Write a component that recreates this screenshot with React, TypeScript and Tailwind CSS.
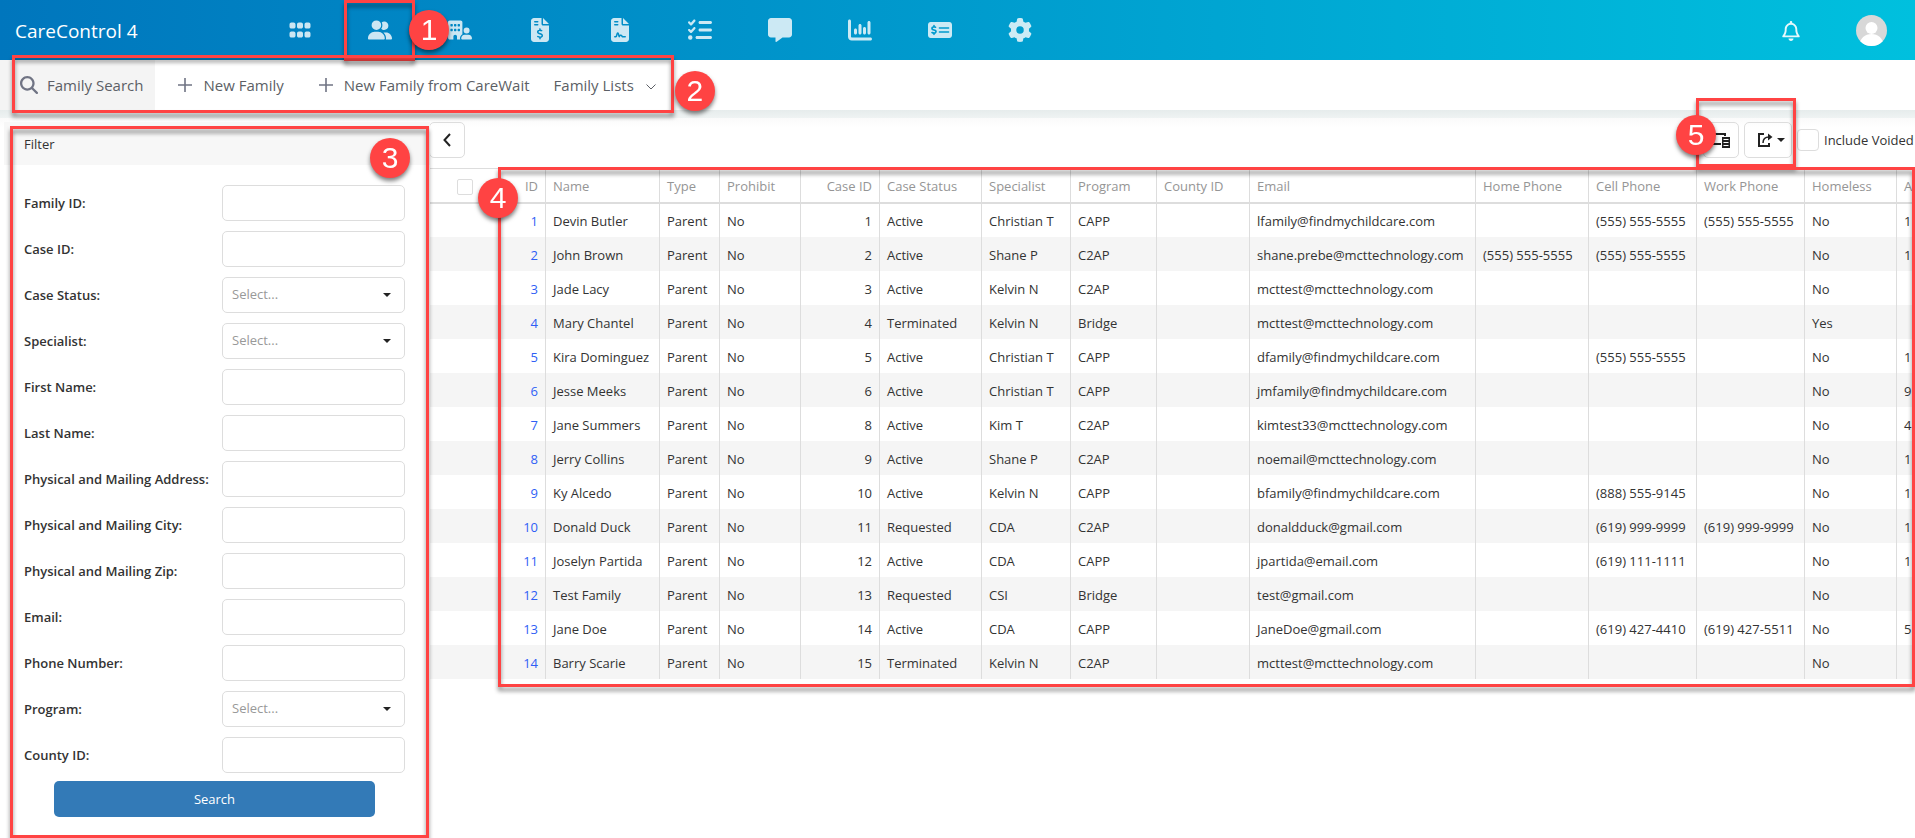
import type { ReactNode } from 'react';
import {
    FaBuildingUser,
    FaChartColumn,
    FaFileContract,
    FaFileInvoiceDollar,
    FaGear,
    FaGrip,
    FaListCheck,
    FaMagnifyingGlass,
    FaMessage,
    FaMoneyCheckDollar,
    FaRegBell,
    FaUserGroup,
} from 'react-icons/fa6';

type Family = {
    id: number;
    name: string;
    caseId: number;
    status: string;
    specialist: string;
    program: string;
    email: string;
    home?: string;
    cell?: string;
    work?: string;
    homeless?: string;
    age?: string;
};

const families: Family[] = [
    { id: 1, name: 'Devin Butler', caseId: 1, status: 'Active', specialist: 'Christian T', program: 'CAPP', email: 'lfamily@findmychildcare.com', cell: '(555) 555-5555', work: '(555) 555-5555', age: '1' },
    { id: 2, name: 'John Brown', caseId: 2, status: 'Active', specialist: 'Shane P', program: 'C2AP', email: 'shane.prebe@mcttechnology.com', home: '(555) 555-5555', cell: '(555) 555-5555', age: '1' },
    { id: 3, name: 'Jade Lacy', caseId: 3, status: 'Active', specialist: 'Kelvin N', program: 'C2AP', email: 'mcttest@mcttechnology.com' },
    { id: 4, name: 'Mary Chantel', caseId: 4, status: 'Terminated', specialist: 'Kelvin N', program: 'Bridge', email: 'mcttest@mcttechnology.com', homeless: 'Yes' },
    { id: 5, name: 'Kira Dominguez', caseId: 5, status: 'Active', specialist: 'Christian T', program: 'CAPP', email: 'dfamily@findmychildcare.com', cell: '(555) 555-5555', age: '1' },
    { id: 6, name: 'Jesse Meeks', caseId: 6, status: 'Active', specialist: 'Christian T', program: 'CAPP', email: 'jmfamily@findmychildcare.com', age: '9' },
    { id: 7, name: 'Jane Summers', caseId: 8, status: 'Active', specialist: 'Kim T', program: 'C2AP', email: 'kimtest33@mcttechnology.com', age: '4' },
    { id: 8, name: 'Jerry Collins', caseId: 9, status: 'Active', specialist: 'Shane P', program: 'C2AP', email: 'noemail@mcttechnology.com', age: '1' },
    { id: 9, name: 'Ky Alcedo', caseId: 10, status: 'Active', specialist: 'Kelvin N', program: 'CAPP', email: 'bfamily@findmychildcare.com', cell: '(888) 555-9145', age: '1' },
    { id: 10, name: 'Donald Duck', caseId: 11, status: 'Requested', specialist: 'CDA', program: 'C2AP', email: 'donaldduck@gmail.com', cell: '(619) 999-9999', work: '(619) 999-9999', age: '1' },
    { id: 11, name: 'Joselyn Partida', caseId: 12, status: 'Active', specialist: 'CDA', program: 'CAPP', email: 'jpartida@email.com', cell: '(619) 111-1111', age: '1' },
    { id: 12, name: 'Test Family', caseId: 13, status: 'Requested', specialist: 'CSI', program: 'Bridge', email: 'test@gmail.com' },
    { id: 13, name: 'Jane Doe', caseId: 14, status: 'Active', specialist: 'CDA', program: 'CAPP', email: 'JaneDoe@gmail.com', cell: '(619) 427-4410', work: '(619) 427-5511', age: '5' },
    { id: 14, name: 'Barry Scarie', caseId: 15, status: 'Terminated', specialist: 'Kelvin N', program: 'C2AP', email: 'mcttest@mcttechnology.com' },
];

const columns = [
    { title: 'Name', width: 'w-[114px]' },
    { title: 'Type', width: 'w-[60px]' },
    { title: 'Prohibit', width: 'w-[81px]' },
    { title: 'Case ID', width: 'w-[79px]' },
    { title: 'Case Status', width: 'w-[102px]' },
    { title: 'Specialist', width: 'w-[89px]' },
    { title: 'Program', width: 'w-[86px]' },
    { title: 'County ID', width: 'w-[93px]' },
    { title: 'Email', width: 'w-[226px]' },
    { title: 'Home Phone', width: 'w-[113px]' },
    { title: 'Cell Phone', width: 'w-[108px]' },
    { title: 'Work Phone', width: 'w-[108px]' },
    { title: 'Homeless', width: 'w-[92px]' },
    { title: 'A', width: 'w-auto' },
];

const filters = [
    { id: 'family-id', label: 'Family ID:' },
    { id: 'case-id', label: 'Case ID:' },
    { id: 'case-status', label: 'Case Status:', select: true },
    { id: 'specialist', label: 'Specialist:', select: true },
    { id: 'first-name', label: 'First Name:' },
    { id: 'last-name', label: 'Last Name:' },
    { id: 'address', label: 'Physical and Mailing Address:' },
    { id: 'city', label: 'Physical and Mailing City:' },
    { id: 'zip', label: 'Physical and Mailing Zip:' },
    { id: 'email', label: 'Email:' },
    { id: 'phone', label: 'Phone Number:' },
    { id: 'program', label: 'Program:', select: true },
    { id: 'county-id', label: 'County ID:' },
];

const navItems = [
    { label: 'Apps', Icon: FaGrip },
    { label: 'Families', Icon: FaUserGroup },
    { label: 'Providers', Icon: FaBuildingUser },
    { label: 'Invoices', Icon: FaFileInvoiceDollar },
    { label: 'Contracts', Icon: FaFileContract },
    { label: 'Tasks', Icon: FaListCheck },
    { label: 'Messages', Icon: FaMessage },
    { label: 'Reports', Icon: FaChartColumn },
    { label: 'Payments', Icon: FaMoneyCheckDollar },
    { label: 'Settings', Icon: FaGear },
];

function Marker({ className }: { className: string }) {
    return (
        <div
            className={`pointer-events-none absolute z-10 border-3 border-[#ff4343] drop-shadow-[0_4px_2px_rgba(0,0,0,0.45)] ${className}`}
            aria-hidden
        />
    );
}

function Badge({ n, className }: { n: number; className: string }) {
    return (
        <div
            className={`absolute z-20 flex size-10 items-center justify-center rounded-full bg-[#ff4343] font-['Liberation_Sans',sans-serif] text-[30px] leading-10 text-white drop-shadow-[0_3px_2px_rgba(0,0,0,0.5)] ${className}`}
        >
            {n}
        </div>
    );
}

function Caret() {
    return (
        <svg viewBox="0 0 8 4" className="h-1 w-2 fill-[#222]" aria-hidden>
            <path d="M0 0h8L4 4z" />
        </svg>
    );
}

function PlusIcon() {
    return (
        <svg viewBox="0 0 14 14" className="size-3.5 stroke-[#707484]" strokeWidth="1.6" aria-hidden>
            <path d="M7 0v14M0 7h14" />
        </svg>
    );
}

function ToolbarButton({ icon, children, className }: { icon?: ReactNode; children: ReactNode; className: string }) {
    return (
        <button type="button" className={`flex h-full items-center whitespace-nowrap ${className}`}>
            {icon}
            {children}
        </button>
    );
}

function Header() {
    return (
        <header className="flex h-15 items-center bg-linear-to-r/srgb from-[#0076bd] to-[#00c0de] pl-[15px] pr-7 text-white">
            <h1 className="w-[245px] pt-0.5 text-[19px]">CareControl 4</h1>
            <nav className="flex">
                {navItems.map(({ label, Icon }) => (
                    <button
                        key={label}
                        type="button"
                        aria-label={label}
                        className="relative flex h-15 w-20 items-center justify-center text-white"
                    >
                        <Icon size={24} className="opacity-80" />
                        {label === 'Families' && (
                            <>
                                <Marker className="left-1 right-[5px] top-0 -bottom-px" />
                                <Badge n={1} className="left-[69px] top-2.5" />
                            </>
                        )}
                    </button>
                ))}
            </nav>
            <div className="ml-auto flex items-center gap-[55px]">
                <button type="button" aria-label="Notifications" className="pt-0.5">
                    <FaRegBell size={20} className="opacity-90" />
                </button>
                <button type="button" aria-label="Account">
                    <svg viewBox="0 0 31 31" className="size-[31px]" aria-hidden>
                        <defs>
                            <clipPath id="avatar">
                                <circle cx="15.5" cy="15.5" r="15.5" />
                            </clipPath>
                        </defs>
                        <g clipPath="url(#avatar)">
                            <rect width="31" height="31" fill="#d8d8d8" />
                            <circle cx="15.5" cy="13" r="6" fill="#fff" />
                            <path d="M3 31c1-8 6-12 12.500-12S27 23 28 31z" fill="#fff" />
                        </g>
                    </svg>
                </button>
            </div>
        </header>
    );
}

function Toolbar() {
    return (
        <div className="flex h-[50px] bg-white text-[15px] text-[#5c5f66]">
            <div className="relative flex">
                <ToolbarButton
                    className="gap-[9px] bg-[#f4f4f4] pl-5 pr-3"
                    icon={<FaMagnifyingGlass size={18} className="text-[#707484]" />}
                >
                    Family Search
                </ToolbarButton>
                <ToolbarButton className="gap-[11px] pl-[23px] pr-3" icon={<PlusIcon />}>
                    New Family
                </ToolbarButton>
                <ToolbarButton className="gap-[11px] pl-[23px] pr-3" icon={<PlusIcon />}>
                    New Family from CareWait
                </ToolbarButton>
                <ToolbarButton className="gap-3 pl-3 pr-[18px]">
                    Family Lists
                    <svg viewBox="0 0 10 6" className="mt-1 h-1.5 w-2.5 fill-none stroke-[#5c5f66]" aria-hidden>
                        <path d="M.5.5 5 5 9.500.5" />
                    </svg>
                </ToolbarButton>
                <Marker className="-bottom-[3px] -top-[5px] left-3 right-0" />
                <Badge n={2} className="-right-[41px] top-[11px]" />
            </div>
        </div>
    );
}

function FilterPanel() {
    return (
        <aside className="relative w-[430px] shrink-0 pb-[21px] pl-1 pt-1">
            <h2 className="h-[43px] bg-[#f7f7f7] pl-5 pt-px leading-[43px]">Filter</h2>
            <form className="flex flex-col pl-5 pr-[25px] pt-5">
                <div className="flex flex-col gap-2.5">
                    {filters.map(({ id, label, select }) => (
                        <div key={id} className="flex h-9 items-center">
                            <label htmlFor={id} className="w-[198px] whitespace-nowrap pt-0.5 font-semibold">
                                {label}
                            </label>
                            {select ? (
                                <div className="relative flex-1">
                                    <select
                                        id={id}
                                        className="h-9 w-full appearance-none rounded-[5px] border border-[#ddd] bg-white px-[9px] text-[#999]"
                                    >
                                        <option>Select...</option>
                                    </select>
                                    <span className="pointer-events-none absolute right-3.5 top-4">
                                        <Caret />
                                    </span>
                                </div>
                            ) : (
                                <input
                                    id={id}
                                    type="text"
                                    className="h-9 min-w-0 flex-1 rounded-[5px] border border-[#ddd] bg-white px-[9px]"
                                />
                            )}
                        </div>
                    ))}
                </div>
                <button type="button" className="mx-[30px] mt-2 h-9 rounded-[5px] bg-[#337ab7] pt-0.5 text-white">
                    Search
                </button>
            </form>
            <Marker className="bottom-0 left-2.5 right-px top-2" />
            <Badge n={3} className="right-5 top-5" />
        </aside>
    );
}

function GridToolbar() {
    return (
        <div className="flex h-[50px] items-start pt-1">
            <button
                type="button"
                aria-label="Collapse filter"
                className="-ml-px flex size-9 items-center justify-center rounded-[5px] border border-[#ddd]"
            >
                <svg viewBox="0 0 8 14" className="h-3.5 w-2 fill-none stroke-[#222]" strokeWidth="2" aria-hidden>
                    <path d="M7 1 1.500 7 7 13" />
                </svg>
            </button>
            <div className="relative ml-auto flex gap-[5px] pr-1">
                <button
                    type="button"
                    aria-label="Column chooser"
                    className="flex size-9 items-center justify-center rounded-[5px] border border-[#ddd]"
                >
                    <svg viewBox="0 0 18 16" className="h-4 w-[18px]" fill="none" stroke="#222" strokeWidth="2" aria-hidden>
                        <path d="M13 4V2H1v10h8" />
                        <path d="M10 5h8v11h-8z" fill="#222" stroke="none" />
                        <path d="M11.500 7.500h5M11.500 10.500h5M11.500 13.500h5" stroke="#fff" strokeWidth="1" />
                    </svg>
                </button>
                <button
                    type="button"
                    aria-label="Export"
                    className="flex h-9 w-12 items-center justify-center gap-1 rounded-[5px] border border-[#ddd] pl-1.5"
                >
                    <svg viewBox="0 0 16 16" className="size-4" fill="none" stroke="#222" strokeWidth="2" aria-hidden>
                        <path d="M7 2H2v12h10v-3" />
                        <path d="M6 11c0-4 2-6 6-6" strokeWidth="1.500" />
                        <path d="M11 1.500 15.500 5 11 8.500z" fill="#222" stroke="none" />
                    </svg>
                    <Caret />
                </button>
                <Marker className="-bottom-[9px] -left-[7px] right-0 -top-6" />
                <Badge n={5} className="-left-[27px] -top-[7px]" />
            </div>
            <label className="flex h-9 w-[119px] items-center gap-[5px] whitespace-nowrap">
                <input type="checkbox" className="ml-px size-[22px] shrink-0 appearance-none rounded-sm border border-[#ddd] bg-white" />
                <span className="pt-0.5">Include Voided</span>
            </label>
        </div>
    );
}

function FamilyGrid() {
    return (
        <div className="relative pb-2">
            <table className="w-full table-fixed border-separate border-spacing-0 whitespace-nowrap text-left">
                <colgroup>
                    <col className="w-[60px]" />
                    <col className="w-[55px]" />
                    {columns.map(({ title, width }) => (
                        <col key={title} className={width} />
                    ))}
                </colgroup>
                <thead>
                    <tr className="h-9 text-[#959595] *:border-b-2 *:border-t *:border-[#ddd] *:px-[7px] *:pt-0.5 *:font-normal">
                        <th>
                            <input
                                type="checkbox"
                                aria-label="Select all"
                                className="ml-5 block size-4 appearance-none rounded-xs border border-[#ddd] bg-white"
                            />
                        </th>
                        <th className="text-right">ID</th>
                        {columns.map(({ title }) => (
                            <th key={title} className={`border-l ${title === 'Case ID' ? 'text-right' : ''}`}>
                                {title}
                            </th>
                        ))}
                    </tr>
                </thead>
                <tbody>
                    {families.map((f) => (
                        <tr
                            key={f.id}
                            className="h-[34px] first:h-[33px] even:bg-[#f5f5f5] *:border-[#ddd] *:px-[7px] *:pt-[3px] *:nth-[n+3]:border-l"
                        >
                            <td />
                            <td className="text-right">
                                <a href="#" className="text-[#2f5ff5]">
                                    {f.id}
                                </a>
                            </td>
                            <td>{f.name}</td>
                            <td>Parent</td>
                            <td>No</td>
                            <td className="text-right">{f.caseId}</td>
                            <td>{f.status}</td>
                            <td>{f.specialist}</td>
                            <td>{f.program}</td>
                            <td />
                            <td>{f.email}</td>
                            <td>{f.home}</td>
                            <td>{f.cell}</td>
                            <td>{f.work}</td>
                            <td>{f.homeless ?? 'No'}</td>
                            <td>{f.age}</td>
                        </tr>
                    ))}
                </tbody>
            </table>
            <Marker className="-top-px bottom-0 left-[68px] right-0" />
            <Badge n={4} className="left-12 top-2.5" />
        </div>
    );
}

export default function App() {
    return (
        <div className="min-h-screen overflow-hidden bg-white font-['Open_Sans',sans-serif] text-[13px] text-[#333]">
            <Header />
            <Toolbar />
            <div className="h-2 bg-linear-to-b from-[#e6ecec] to-[#eff3f3]" />
            <div className="flex bg-linear-to-b from-[#fafafa] to-white to-[10px]">
                <FilterPanel />
                <main className="min-w-0 flex-1">
                    <GridToolbar />
                    <FamilyGrid />
                </main>
            </div>
        </div>
    );
}
